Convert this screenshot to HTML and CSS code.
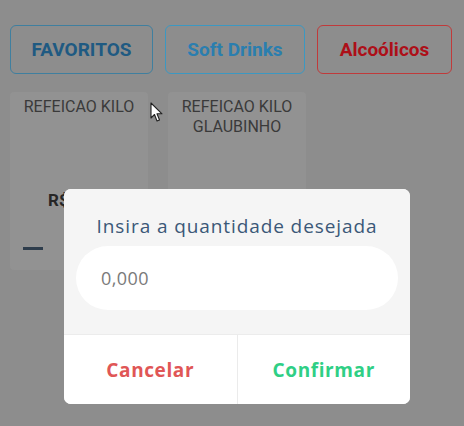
FILE: index.html
```html
<!DOCTYPE html>
<html lang="pt-BR">
<head>
  <meta charset="UTF-8" />
  <meta name="viewport" content="width=device-width, initial-scale=1.0" />
  <title>Produtos</title>
  <link rel="stylesheet" href="styles.css">
</head>
<body>
  <div class="page">
    <div class="tabs">
      <button class="tab tab-fav">FAVORITOS</button>
      <button class="tab tab-soft">Soft Drinks</button>
      <button class="tab tab-alc">Alcoólicos</button>
      <span class="tab tab-other"></span>
    </div>

    <div class="cards">
      <div class="card">
        <div class="card-name">REFEICAO KILO</div>
        <div class="card-price">R$</div>
        <div class="card-qty"><span class="dash"></span></div>
      </div>
      <div class="card">
        <div class="card-name">REFEICAO KILO<br>GLAUBINHO</div>
      </div>
    </div>
  </div>

  <!-- pointer from the recording -->
  <svg class="cursor" width="14" height="21" viewBox="0 0 14 21">
    <path d="M1 1 L1 16 L4.5 12.5 L7 19 L9.5 18 L7 11.8 L12 11.8 Z" fill="#fff" stroke="#222" stroke-width="1.1" stroke-linejoin="round"/>
  </svg>

  <div class="modal">
    <div class="modal-body">
      <h2 class="modal-title">Insira a quantidade desejada</h2>
      <input class="qty-input" type="text" placeholder="0,000">
    </div>
    <div class="modal-actions">
      <button class="action cancel">Cancelar</button>
      <button class="action confirm">Confirmar</button>
    </div>
  </div>
</body>
</html>
```

FILE: styles.css
```css
body {
  margin: 0;
  background: #8d8d8d;
  font-family: Roboto, 'Liberation Sans', sans-serif;
  overflow: hidden;
  height: 426px;
  position: relative;
}

.page {
  padding: 25px 0 0 10px;
}

.tabs {
  display: flex;
  gap: 12px;
  width: 600px;
}

.tab {
  flex: none;
  height: 49px;
  box-sizing: border-box;
  background: transparent;
  border: 1.5px solid;
  border-radius: 6px;
  font-family: Roboto, 'Liberation Sans', sans-serif;
  font-size: 19px;
  font-weight: bold;
  padding: 0;
}

.tab-fav {
  width: 143px;
  color: #1f5a82;
  border-color: #3f7f9f;
}

.tab-soft {
  width: 140px;
  color: #2a7eaf;
  border-color: #3b98c2;
}

.tab-alc {
  width: 135px;
  color: #ad0f18;
  border-color: #c03a3a;
}

.tab-other {
  width: 120px;
  border-color: #b88850;
}

.cards {
  display: flex;
  gap: 20px;
  margin-top: 18px;
}

.card {
  width: 138px;
  height: 178px;
  background: #929292;
  border-radius: 4px;
  text-align: center;
  position: relative;
}

.card-name {
  padding-top: 5px;
  font-size: 16px;
  line-height: 20px;
  color: #3a3a3a;
}

.card-price {
  position: absolute;
  left: 38px;
  top: 98px;
  font-size: 17px;
  font-weight: bold;
  color: #262626;
}

.card-qty {
  position: absolute;
  left: 13px;
  top: 155px;
}

.dash {
  display: block;
  width: 20px;
  height: 3px;
  background: #2e3d4c;
}

.cursor {
  position: absolute;
  left: 150px;
  top: 102px;
}

.modal {
  position: absolute;
  left: 64px;
  top: 189px;
  width: 346px;
  height: 215px;
  background: #fff;
  border-radius: 7px;
  overflow: hidden;
  font-family: 'Open Sans', sans-serif;
}

.modal-body {
  background: #f5f5f5;
  height: 146px;
  padding: 26px 12px 0;
  box-sizing: border-box;
  border-bottom: 1px solid #ececec;
}

.modal-title {
  margin: 0 0 9px;
  text-align: center;
  font-size: 19px;
  font-weight: normal;
  line-height: 22px;
  letter-spacing: 0.9px;
  color: #3b5878;
  white-space: nowrap;
}

.qty-input {
  display: block;
  width: 100%;
  height: 64px;
  box-sizing: border-box;
  border: none;
  border-radius: 32px;
  background: #fff;
  padding: 0 25px;
  font-family: 'Open Sans', sans-serif;
  font-size: 18px;
  letter-spacing: 0.4px;
  outline: none;
}

.qty-input::placeholder {
  color: #7a7a7a;
}

.modal-actions {
  display: flex;
  height: 69px;
}

.action {
  flex: 1;
  background: #fff;
  border: none;
  font-family: 'Open Sans', sans-serif;
  font-size: 19px;
  font-weight: bold;
  letter-spacing: 0.6px;
  padding: 0;
}

.cancel {
  color: #e05656;
  border-right: 1px solid #ebebeb;
}

.confirm {
  color: #2fcf85;
}
```
